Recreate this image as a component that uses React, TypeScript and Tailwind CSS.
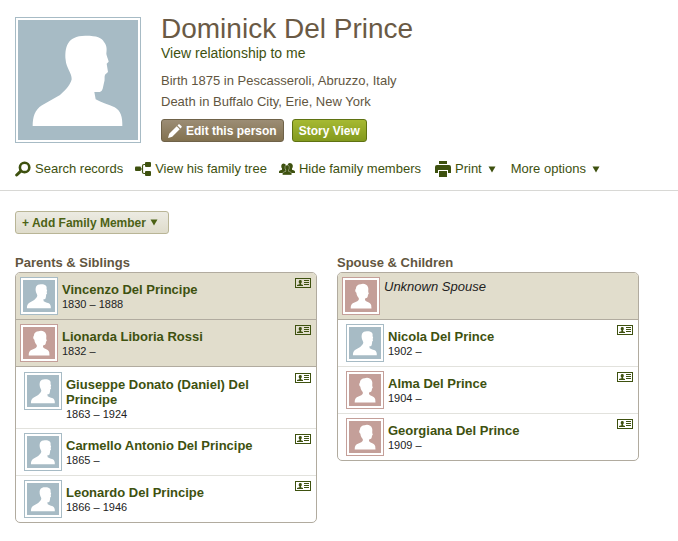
import React from 'react';

type Sex = 'm' | 'f';

const malePath =
  'M44 318 C44 292 50 270 72 256 L126 225 C146 208 158 192 161 178 C162 160 144 142 143 120 C140 84 146 46 204 47 C236 47 252 53 258 66 C268 78 266 90 265 102 C267 112 271 118 272 125 L266 131 L270 156 L261 164 C258 172 262 178 258 188 C254 205 255 216 240 216 L229 216 L233 238 C250 248 272 254 290 262 C308 272 314 292 313 318 Z';
const femalePath =
  'M64 320 C64 288 72 270 94 260 L138 238 C154 230 160 216 154 202 C138 186 130 166 128 144 C114 134 110 112 122 98 C124 66 146 50 176 48 C206 34 250 46 260 84 C266 104 260 120 262 134 L268 154 L260 162 L254 192 C246 206 236 206 226 208 C222 222 228 234 244 242 C270 254 290 262 295 284 L298 320 Z';

function Avatar({ sex, large = false }: { sex: Sex; large?: boolean }) {
  const border = sex === 'm' ? 'border-[#a7bbc5]' : 'border-[#c49f99]';
  const bg = sex === 'm' ? 'bg-[#a7bbc5]' : 'bg-[#c49f99]';
  return (
    <div className={`shrink-0 border bg-white p-[2px] ${border} ${large ? 'size-[126px]' : 'size-[38px]'}`}>
      <svg viewBox="0 0 360 360" className={`block size-full ${bg}`} aria-hidden="true">
        <path d={sex === 'm' ? malePath : femalePath} fill="#fff" />
      </svg>
    </div>
  );
}

function Caret() {
  return (
    <svg viewBox="0 0 8 7" className="h-[7px] w-2" aria-hidden="true">
      <path d="M0.500 0.500H7.500L4 6.500Z" fill="currentColor" />
    </svg>
  );
}

function SearchIcon() {
  return (
    <svg viewBox="0 0 16 16" className="size-4" fill="none" stroke="currentColor" aria-hidden="true">
      <circle cx="9.600" cy="6.400" r="4.700" strokeWidth="2.600" />
      <path d="M5.800 10.200L1.700 14" strokeWidth="3" strokeLinecap="round" />
    </svg>
  );
}

function TreeIcon() {
  return (
    <svg viewBox="0 0 16 14" className="h-[14px] w-4" fill="currentColor" aria-hidden="true">
      <rect x="0" y="4.500" width="6" height="4.500" rx="1" />
      <rect x="10" y="0" width="6" height="5" rx="1" />
      <rect x="10" y="9" width="6" height="5" rx="1" />
      <path d="M6 7H7M10 2.500H9Q7.500 2.500 7.500 4V10Q7.500 11.500 9 11.500H10" fill="none" stroke="currentColor" strokeWidth="1.200" />
    </svg>
  );
}

function PeopleIcon() {
  return (
    <svg viewBox="0 0 16 12" className="h-3 w-4" aria-hidden="true">
      <path fill="currentColor" d="M0 10V8.500Q0 7.500 3 6.700V5.500Q2 4.500 2.300 2.500Q2.500.5 4.800.5Q7 .5 7 3L6.500 5.500V6.500L8 7L5 10Z" />
      <path fill="currentColor" d="M16 10V8.500Q16 7.500 13 6.700V5.500Q14 4.500 13.800 2.500Q13.500 0 11 0Q8.500 0 8.500 3L9 5.500V6.500L8 7L11 10Z" />
      <path fill="currentColor" stroke="#fff" strokeWidth=".35" d="M3.500 12V10.300Q3.500 9.300 6.800 8.200V7Q5.700 5.500 6 3.700Q6.300 2 8.200 2Q10.200 2 10.300 4Q10.400 5.800 9.500 7V8.200Q12.700 9.300 12.700 10.300V12Z" />
    </svg>
  );
}

function PrintIcon() {
  return (
    <svg viewBox="0 0 16 16" className="size-4" fill="currentColor" aria-hidden="true">
      <path d="M4 0H12V3H4ZM2 4H14Q16 4 16 6V12H13V9H3V12H0V6Q0 4 2 4ZM4 10H12V16H4Z" />
    </svg>
  );
}

function PencilIcon() {
  return (
    <svg viewBox="0 0 14 14" className="size-[14px]" fill="currentColor" aria-hidden="true">
      <path d="M0 14L1.200 9.800L8.700 2.300L11.700 5.300L4.200 12.800ZM9.500 1.500L10.700.3Q11.200 0 11.700.4L13.600 2.300Q14 2.800 13.600 3.300L12.500 4.500Z" />
    </svg>
  );
}

function CardIcon() {
  return (
    <svg viewBox="0 0 16 10" className="block h-[10px] w-4" aria-hidden="true">
      <rect x=".5" y=".5" width="15" height="9" fill="none" stroke="currentColor" />
      <path fill="currentColor" d="M2 8V7L4.500 6.200V5.500Q3.600 4.700 3.700 3.400Q3.800 2 5.300 2Q6.800 2 6.800 3.400Q6.800 4.700 6 5.500V6.200L8 7V8ZM9 2H14V3H9ZM9 4H14V5H9ZM9 6H14V7H9Z" />
    </svg>
  );
}

function Action({ icon, label, menu = false }: { icon?: React.ReactNode; label: string; menu?: boolean }) {
  return (
    <button type="button" className="flex items-center gap-1 whitespace-nowrap">
      {icon}
      <span>{label}</span>
      {menu && (
        <span className="pl-[2px]">
          <Caret />
        </span>
      )}
    </button>
  );
}

type Person = { name: string; years: string; sex: Sex };

function PersonRow({ person, primary = false }: { person: Person; primary?: boolean }) {
  return (
    <li
      className={`flex gap-1 pt-1 pr-[5px] pb-1 ${
        primary ? 'border-b border-[#b1ab9f] bg-[#e1ddcc] pl-1' : 'border-t border-[#e2e2dd] pl-2 first:border-t-0'
      }`}
    >
      <Avatar sex={person.sex} />
      <div className="min-w-0 flex-1 pt-[5px] pb-[2px]">
        <a href="#person" className="block text-[13px] leading-[15px] font-bold text-[#3e510f]">
          {person.name}
        </a>
        <p className="text-[11px] leading-[15px] text-[#222]">{person.years}</p>
      </div>
      <button type="button" aria-label={`Profile of ${person.name}`} className="self-start pt-px text-[#3e510f]">
        <CardIcon />
      </button>
    </li>
  );
}

const parents: Person[] = [
  { name: 'Vincenzo Del Principe', years: '1830 – 1888', sex: 'm' },
  { name: 'Lionarda Liboria Rossi', years: '1832 –', sex: 'f' },
];
const siblings: Person[] = [
  { name: 'Giuseppe Donato (Daniel) Del Principe', years: '1863 – 1924', sex: 'm' },
  { name: 'Carmello Antonio Del Principe', years: '1865 –', sex: 'm' },
  { name: 'Leonardo Del Principe', years: '1866 – 1946', sex: 'm' },
];
const children: Person[] = [
  { name: 'Nicola Del Prince', years: '1902 –', sex: 'm' },
  { name: 'Alma Del Prince', years: '1904 –', sex: 'f' },
  { name: 'Georgiana Del Prince', years: '1909 –', sex: 'f' },
];

export default function App() {
  return (
    <main className="bg-white pb-4 font-['Liberation_Sans',Arial,sans-serif] text-[13px] leading-4 text-[#62563f]">
      <header className="border-b border-[#d8d8d5] px-[15px] pt-[17px] pb-[13px]">
        <div className="flex gap-5">
          <Avatar sex="m" large />
          <div className="-mt-1">
            <h1 className="text-[28px] leading-8 text-[#6a5a45]">Dominick Del Prince</h1>
            <a href="#relationship" className="block text-[14px] leading-4 text-[#3e510f]">
              View relationship to me
            </a>
            <div className="mt-[9px] leading-[21px]">
              <p>Birth 1875 in Pescasseroli, Abruzzo, Italy</p>
              <p>Death in Buffalo City, Erie, New York</p>
            </div>
            <div className="mt-[7px] flex gap-2 text-xs font-bold text-white">
              <button
                type="button"
                className="flex h-[23px] items-center gap-1 rounded-[3px] border border-[#6f6249] bg-linear-to-b from-[#9c8d75] to-[#82714f] px-[6px]"
              >
                <PencilIcon />
                Edit this person
              </button>
              <button
                type="button"
                className="h-[23px] rounded-[3px] border border-[#5f7212] bg-linear-to-b from-[#a6b932] to-[#839a1e] px-[6px]"
              >
                Story View
              </button>
            </div>
          </div>
        </div>
        <nav className="mt-[18px] flex items-center text-[#3e510f]">
          <div className="flex gap-3">
            <Action icon={<SearchIcon />} label="Search records" />
            <Action icon={<TreeIcon />} label="View his family tree" />
            <Action icon={<PeopleIcon />} label="Hide family members" />
          </div>
          <div className="flex gap-[15px] pl-[14px]">
            <Action icon={<PrintIcon />} label="Print" menu />
            <Action label="More options" menu />
          </div>
        </nav>
      </header>

      <section className="pt-5 pr-[39px] pl-[15px]">
        <button
          type="button"
          className="flex h-[23px] items-center gap-1 rounded-[3px] border border-[#b9b596] bg-linear-to-b from-[#ecebe3] to-[#dfdccb] px-[6px] text-xs font-bold text-[#4c6215]"
        >
          + Add Family Member
          <span className="pr-1">
            <Caret />
          </span>
        </button>
        <div className="mt-5 grid grid-cols-2 items-start gap-5">
          <section>
            <h2 className="leading-[18px] font-bold">Parents &amp; Siblings</h2>
            <div className="overflow-hidden rounded-[5px] border border-[#b1ab9f]">
              <ul>
                {parents.map((p) => (
                  <PersonRow key={p.name} person={p} primary />
                ))}
              </ul>
              <ul className="pt-px">
                {siblings.map((p) => (
                  <PersonRow key={p.name} person={p} />
                ))}
              </ul>
            </div>
          </section>
          <section>
            <h2 className="leading-[18px] font-bold">Spouse &amp; Children</h2>
            <div className="overflow-hidden rounded-[5px] border border-[#b1ab9f]">
              <div className="flex gap-1 border-b border-[#b1ab9f] bg-[#e1ddcc] p-1">
                <Avatar sex="f" />
                <p className="pt-[2px] text-[#222] italic">Unknown Spouse</p>
              </div>
              <ul>
                {children.map((p) => (
                  <PersonRow key={p.name} person={p} />
                ))}
              </ul>
            </div>
          </section>
        </div>
      </section>
    </main>
  );
}
